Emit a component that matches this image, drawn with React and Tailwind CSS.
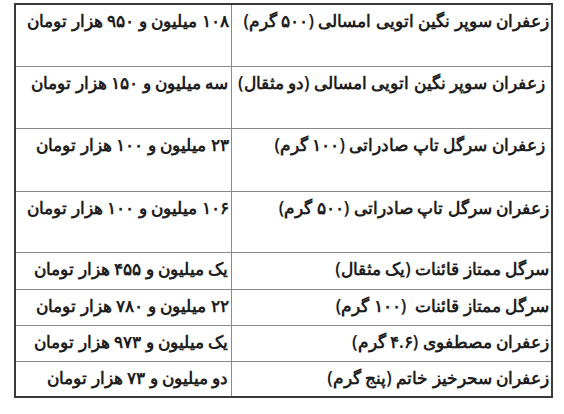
const rows = [
  ["زعفران سوپر نگین اتویی امسالی (۵۰۰ گرم)", "۱۰۸ میلیون و ۹۵۰ هزار تومان", "h-[62px]"],
  [" زعفران سوپر نگین اتویی امسالی (دو مثقال)", "سه میلیون و ۱۵۰ هزار تومان", "h-[62px]"],
  [" زعفران سرگل تاپ صادراتی (۱۰۰ گرم)", "۲۳ میلیون و ۱۰۰ هزار تومان", "h-[63px]"],
  ["زعفران سرگل تاپ صادراتی (۵۰۰ گرم)", "۱۰۶ میلیون و ۱۰۰ هزار تومان", "h-[61px]"],
  ["سرگل ممتاز قائنات (یک مثقال)", "یک میلیون و ۴۵۵ هزار تومان", "h-[37px]"],
  ["سرگل ممتاز قائنات  (۱۰۰ گرم)", "۲۲ میلیون و ۷۸۰ هزار تومان", "h-[36px]"],
  ["زعفران مصطفوی (۴.۶ گرم)", "یک میلیون و ۹۷۳ هزار تومان", "h-[36px]"],
  ["زعفران سحرخیز خاتم (پنج گرم)", "دو میلیون و ۷۳ هزار تومان", "h-[36px]"],
]

export default function App() {
  return (
    <div className="w-[564px] h-[414px] bg-white pt-[3px] pl-[14px]" dir="ltr">
      <table
        dir="rtl"
        className="table-fixed w-[537px] border-collapse border-2 border-[#3a3a3a] text-[17px] font-semibold text-[#1e1e1e]"
        style={{ fontFamily: '"Noto Sans", sans-serif' }}
      >
        <colgroup>
          <col className="w-[321px]" />
          <col className="w-[216px]" />
        </colgroup>
        <tbody>
          {rows.map(([name, price, h], i) => (
            <tr key={i} className={h}>
              <td className="border border-[#8a8a8a] px-[2px] pt-[3px] pb-0 align-top leading-[26px] whitespace-pre overflow-hidden">
                {name}
              </td>
              <td className="border border-[#8a8a8a] px-[2px] pt-[3px] pb-0 align-top leading-[26px] whitespace-pre overflow-hidden">
                {price}
              </td>
            </tr>
          ))}
        </tbody>
      </table>
    </div>
  )
}
